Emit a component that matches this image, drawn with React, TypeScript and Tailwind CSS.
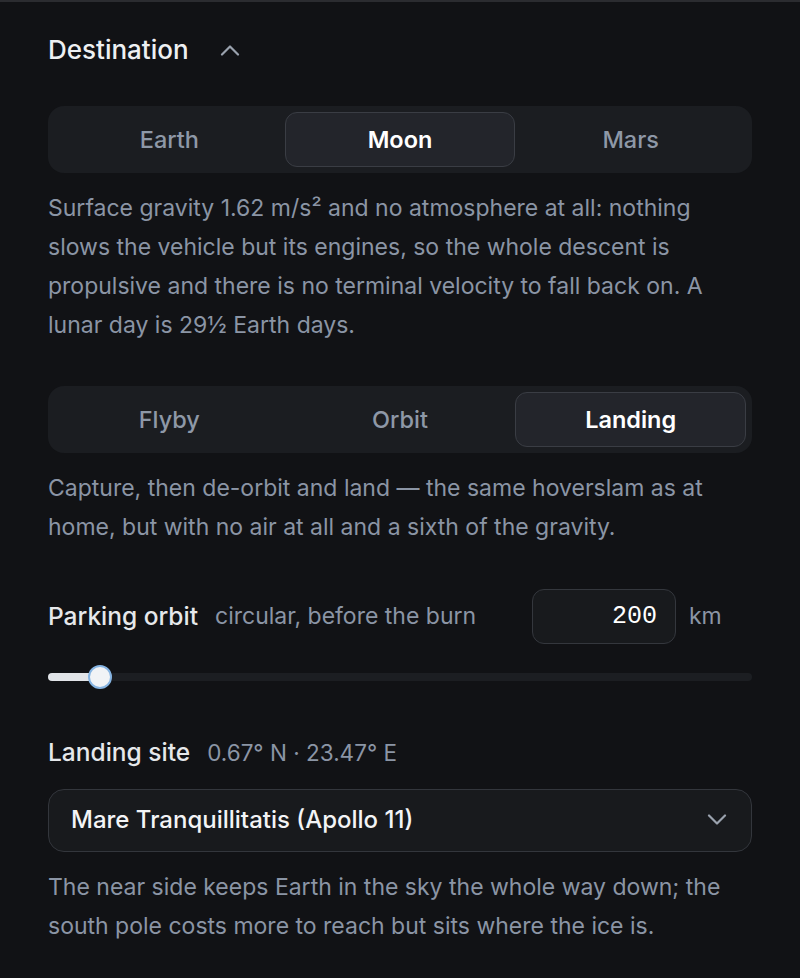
import { useState } from "react";

const sans = { fontFamily: "Inter, 'Noto Sans', sans-serif" };

function Chevron({ up = false }: { up?: boolean }) {
  return (
    <svg width="20" height="12" viewBox="0 0 20 12" fill="none" className="shrink-0">
      <path
        d={up ? "M2 10.5 L10 2.5 L18 10.5" : "M2 1.5 L10 9.5 L18 1.5"}
        stroke="#9aa2ae"
        strokeWidth="2.2"
        strokeLinecap="round"
        strokeLinejoin="round"
      />
    </svg>
  );
}

function Segmented({ options, value, onChange }: { options: string[]; value: string; onChange: (v: string) => void }) {
  return (
    <div className="grid grid-cols-3 rounded-2xl bg-[#1b1d21] p-1.5">
      {options.map((o) => {
        const active = o === value;
        return (
          <button
            key={o}
            onClick={() => onChange(o)}
            className={
              active
                ? "h-[55px] rounded-xl border border-[#3a3d44] bg-[#23252b] text-[23.5px] font-semibold text-white"
                : "h-[55px] rounded-xl border border-transparent text-[23.5px] font-medium text-[#8e98a7]"
            }
          >
            {o}
          </button>
        );
      })}
    </div>
  );
}

export default function App() {
  const [dest, setDest] = useState("Moon");
  const [mode, setMode] = useState("Landing");
  const [alt, setAlt] = useState("200");

  return (
    <div style={sans} className="min-h-screen border-t-2 border-[#2b2c30] bg-[#111215] px-12 pt-[30px]">
      <div className="flex items-center gap-[31px]">
        <h2 className="text-[26px] font-medium leading-9 text-[#eef0f2]">Destination</h2>
        <Chevron up />
      </div>

      <div className="mt-[38px]">
        <Segmented options={["Earth", "Moon", "Mars"]} value={dest} onChange={setDest} />
      </div>
      <p className="mt-4 text-[23px] leading-[39px] text-[#8b95a5]">
        Surface gravity 1.62 m/s² and no atmosphere at all: nothing slows the vehicle but its engines, so the whole
        descent is propulsive and there is no terminal velocity to fall back on. A lunar day is 29½ Earth days.
      </p>

      <div className="mt-[41px]">
        <Segmented options={["Flyby", "Orbit", "Landing"]} value={mode} onChange={setMode} />
      </div>
      <p className="mt-4 text-[23px] leading-[39px] text-[#8b95a5]">
        Capture, then de-orbit and land — the same hoverslam as at home, but with no air at all and a sixth of the
        gravity.
      </p>

      {/* parking orbit altitude */}
      <div className="mt-[42px] flex items-center">
        <span className="text-[24.5px] font-medium text-[#e6e8eb]">Parking orbit</span>
        <span className="ml-[17px] text-[23px] text-[#8b95a5]">circular, before the burn</span>
        <input
          value={alt}
          onChange={(e) => setAlt(e.target.value)}
          className="ml-auto h-[55px] w-[144px] rounded-xl border border-[#34373d] bg-[#181a1d] pr-[18px] text-right font-mono text-[25px] text-white outline-none"
        />
        <span className="ml-[13px] w-[63px] text-[23px] text-[#8b95a5]">km</span>
      </div>

      <div className="relative mt-[21px] h-6">
        <div className="absolute left-0 right-0 top-2 h-2 rounded-full bg-[#1c1e22]" />
        <div className="absolute left-0 top-2 h-2 w-[52px] rounded-full bg-[#e1e4e8]" />
        <div className="absolute left-10 top-0 h-6 w-6 rounded-full border-2 border-[#86b4e2] bg-[#f1f3f6]" />
      </div>

      {/* landing site */}
      <div className="mt-[47px] flex items-baseline">
        <span className="text-[24.5px] font-medium leading-8 text-[#e6e8eb]">Landing site</span>
        <span className="ml-[17px] text-[22.5px] text-[#8b95a5]">0.67° N · 23.47° E</span>
      </div>

      <div className="mt-[19px] flex h-[63px] items-center justify-between rounded-2xl border border-[#33363c] bg-[#181a1d] pl-[22px] pr-6">
        <span className="text-[24px] font-medium text-[#f3f4f6]">Mare Tranquillitatis (Apollo 11)</span>
        <Chevron />
      </div>
      <p className="mt-4 text-[23px] leading-[39px] text-[#8b95a5]">
        The near side keeps Earth in the sky the whole way down; the south pole costs more to reach but sits where the
        ice is.
      </p>
    </div>
  );
}
